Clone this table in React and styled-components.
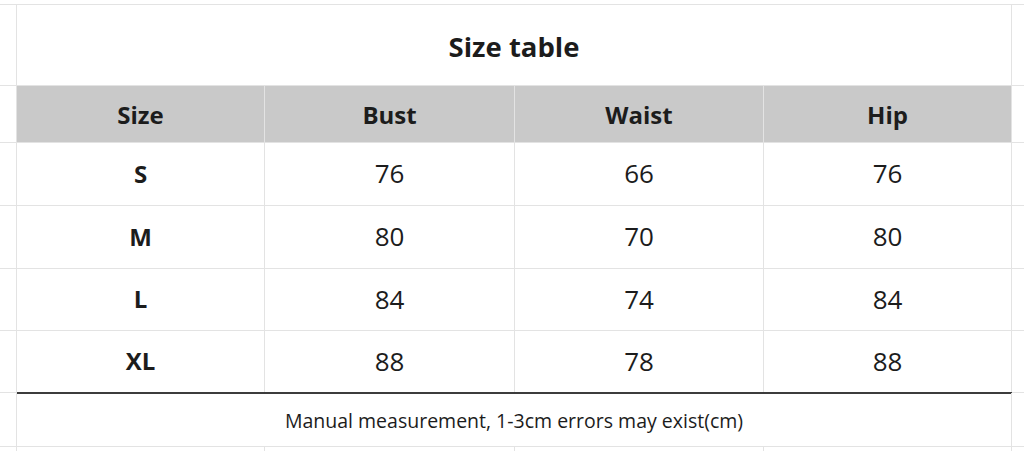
import styled, { createGlobalStyle } from 'styled-components';

const GlobalStyle = createGlobalStyle`
  html, body {
    margin: 0;
    padding: 0;
    background: #ffffff;
  }
  body {
    font-family: 'Open Sans', 'Noto Sans', 'Liberation Sans', sans-serif;
    color: #1c1c1c;
  }
`;

const columns = '17px 248px 250px 249px 248px 1fr';

const rows = [
  { size: 'S', bust: 76, waist: 66, hip: 76, height: 63 },
  { size: 'M', bust: 80, waist: 70, hip: 80, height: 63 },
  { size: 'L', bust: 84, waist: 74, hip: 84, height: 62 },
  { size: 'XL', bust: 88, waist: 78, hip: 88, height: 62 }
];

const Sheet = styled.div`
  width: 1024px;
  height: 451px;
  overflow: hidden;
  padding-top: 4px;
  box-sizing: border-box;
`;

const Row = styled.div`
  display: grid;
  grid-template-columns: ${columns};
  height: ${(p) => p.$height}px;
  box-sizing: border-box;
  border-top: 1px solid #e3e3e3;
`;

const Gutter = styled.div`
  border-right: 1px solid #e3e3e3;
`;

const Cell = styled.div`
  display: flex;
  align-items: center;
  justify-content: center;
  padding-top: ${(p) => p.$offset || 0}px;
  padding-bottom: ${(p) => p.$lift || 0}px;
  border-right: 1px solid #e3e3e3;
  background: ${(p) => (p.$head ? '#c9c9c9' : 'transparent')};
  box-shadow: ${(p) => (p.$strong ? 'inset 0 1px 0 #3c3c3c, 0 -1px 0 #3c3c3c' : 'none')};
  font-size: ${(p) => p.$size || 26}px;
  font-weight: ${(p) => (p.$bold ? 700 : 400)};
  grid-column: ${(p) => p.$span || 'auto'};
`;

const Filler = styled.div``;

const App = () => (
  <>
    <GlobalStyle />
    <Sheet>
      <Row $height={81}>
        <Gutter />
        <Cell $span="2 / 6" $bold $size={27.5} $offset={2}>
          Size table
        </Cell>
        <Filler />
      </Row>
      <Row $height={57}>
        <Gutter />
        <Cell $head $bold $size={24}>Size</Cell>
        <Cell $head $bold $size={24}>Bust</Cell>
        <Cell $head $bold $size={24}>Waist</Cell>
        <Cell $head $bold $size={24}>Hip</Cell>
        <Filler />
      </Row>
      {rows.map((r) => (
        <Row key={r.size} $height={r.height}>
          <Gutter />
          <Cell $bold $size={24} $lift={2}>{r.size}</Cell>
          <Cell $lift={2}>{r.bust}</Cell>
          <Cell $lift={2}>{r.waist}</Cell>
          <Cell $lift={2}>{r.hip}</Cell>
          <Filler />
        </Row>
      ))}
      <Row $height={54}>
        <Gutter />
        <Cell $span="2 / 6" $size={19.5} $offset={2} $strong>
          Manual measurement, 1-3cm errors may exist(cm)
        </Cell>
        <Filler />
      </Row>
      <Row $height={20}>
        <Gutter />
        <Cell />
        <Cell />
        <Cell />
        <Cell />
        <Filler />
      </Row>
    </Sheet>
  </>
);

export default App;
